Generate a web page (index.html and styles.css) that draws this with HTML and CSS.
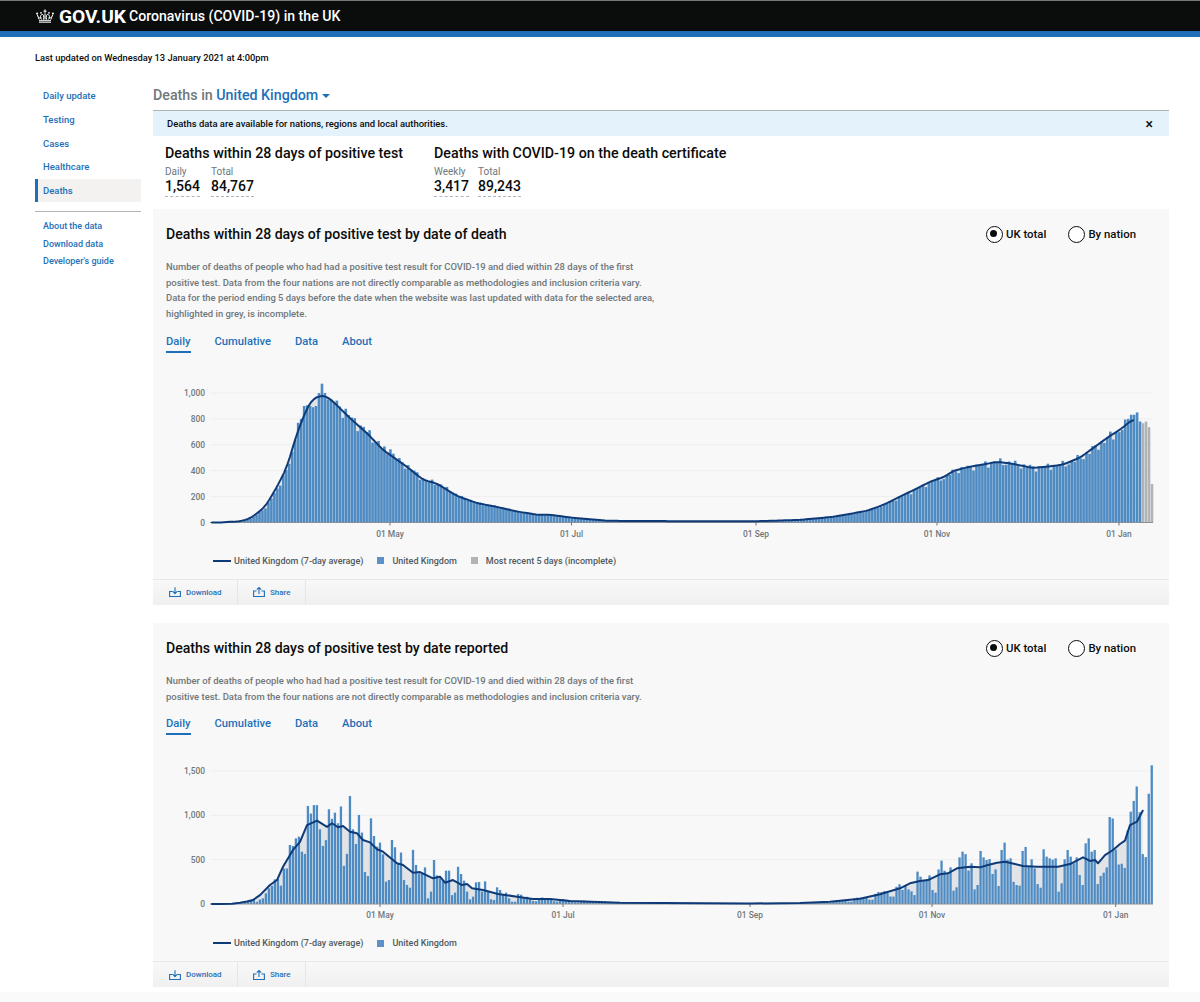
FILE: index.html
```html
<!DOCTYPE html>
<html lang="en">
<head>
<meta charset="utf-8">
<title>Coronavirus (COVID-19) in the UK</title>
<link rel="stylesheet" href="styles.css">
</head>
<body>
<header class="site-header">
  <div class="brand">
    <svg class="crown" viewBox="0 0 18 14" aria-hidden="true">
      <path d="M3 13.200h12M3 11.700h12" fill="none" stroke="#fff" stroke-width="1"/>
      <path d="M3.200 10.600 1.200 5.600M14.800 10.600l2-5M5.800 10.600C3.500 8.600 4.600 5.400 6.300 5.400c1.300 0 1.700 1.900 1.200 5.200M12.200 10.600c2.300-2 1.200-5.200-.5-5.200-1.300 0-1.700 1.900-1.200 5.200M9 10.600V4.200M7.400 2.200h3.200M9 .4v3.400M2.600 8c1 1.200 2.200 1.300 2.800.8M15.400 8c-1 1.200-2.200 1.300-2.800.8" fill="none" stroke="#fff" stroke-width="1"/>
      <circle cx="1.100" cy="4.500" r="1" fill="#fff"/><circle cx="16.900" cy="4.500" r="1" fill="#fff"/><circle cx="5" cy="3.800" r=".9" fill="#fff"/><circle cx="13" cy="3.800" r=".9" fill="#fff"/>
    </svg>
    <span class="brand-mark">GOV.UK</span>
    <span class="brand-title">Coronavirus (COVID-19) in the UK</span>
  </div>
</header>
<p class="updated">Last updated on Wednesday 13 January 2021 at 4:00pm</p>
<div class="layout">
  <nav class="side">
    <ul class="nav-main">
      <li><a href="#">Daily update</a></li>
      <li><a href="#">Testing</a></li>
      <li><a href="#">Cases</a></li>
      <li><a href="#">Healthcare</a></li>
      <li class="is-active"><a href="#">Deaths</a></li>
    </ul>
    <ul class="nav-sub">
      <li><a href="#">About the data</a></li>
      <li><a href="#">Download data</a></li>
      <li><a href="#">Developer's guide</a></li>
    </ul>
  </nav>
  <main class="content">
    <h1 class="page-title">Deaths in <a href="#">United Kingdom</a><span class="caret"></span></h1>
    <div class="banner"><span>Deaths data are available for nations, regions and local authorities.</span><span class="close">×</span></div>
    <section class="headlines">
      <div class="headline">
        <h2>Deaths within 28 days of positive test</h2>
        <div class="metrics">
          <div class="metric"><span class="m-label">Daily</span><span class="m-value">1,564</span></div>
          <div class="metric"><span class="m-label">Total</span><span class="m-value">84,767</span></div>
        </div>
      </div>
      <div class="headline">
        <h2>Deaths with COVID-19 on the death certificate</h2>
        <div class="metrics metrics-tight">
          <div class="metric"><span class="m-label">Weekly</span><span class="m-value">3,417</span></div>
          <div class="metric"><span class="m-label">Total</span><span class="m-value">89,243</span></div>
        </div>
      </div>
    </section>

    <article class="card">
      <div class="card-head">
        <h3>Deaths within 28 days of positive test by date of death</h3>
        <div class="radios">
          <span class="radio is-on">UK total</span>
          <span class="radio">By nation</span>
        </div>
      </div>
      <p class="desc">Number of deaths of people who had had a positive test result for COVID-19 and died within 28 days of the first<br>positive test. Data from the four nations are not directly comparable as methodologies and inclusion criteria vary.<br>Data for the period ending 5 days before the date when the website was last updated with data for the selected area,<br>highlighted in grey, is incomplete.</p>
      <div class="tabs"><a class="is-on" href="#">Daily</a><a href="#">Cumulative</a><a href="#">Data</a><a href="#">About</a></div>
      <svg class="chart" id="chart-death" viewBox="0 0 1016 175" role="img" aria-label="Deaths by date of death"></svg>
      <div class="legend">
        <span class="key-line"></span><span class="key-text">United Kingdom (7-day average)</span>
        <span class="key-box"></span><span class="key-text">United Kingdom</span>
        <span class="key-box key-grey"></span><span class="key-text">Most recent 5 days (incomplete)</span>
      </div>
      <div class="actions">
        <a class="action action-dl" href="#"><svg viewBox="0 0 12 10" aria-hidden="true"><path d="M3.500 4.500H.6v5h10.800v-5H8.500M6 .2v6.300M3.800 4.400 6 6.600l2.200-2.200"/></svg>Download</a>
        <a class="action action-sh" href="#"><svg viewBox="0 0 12 10" aria-hidden="true"><path d="M3.500 4H.6v5.500h10.800V4H8.500M6 7V.6M3.800 2.700 6 .5l2.200 2.200"/></svg>Share</a>
      </div>
    </article>

    <article class="card">
      <div class="card-head">
        <h3>Deaths within 28 days of positive test by date reported</h3>
        <div class="radios">
          <span class="radio is-on">UK total</span>
          <span class="radio">By nation</span>
        </div>
      </div>
      <p class="desc">Number of deaths of people who had had a positive test result for COVID-19 and died within 28 days of the first<br>positive test. Data from the four nations are not directly comparable as methodologies and inclusion criteria vary.</p>
      <div class="tabs"><a class="is-on" href="#">Daily</a><a href="#">Cumulative</a><a href="#">Data</a><a href="#">About</a></div>
      <svg class="chart" id="chart-report" viewBox="0 0 1016 175" role="img" aria-label="Deaths by date reported"></svg>
      <div class="legend">
        <span class="key-line"></span><span class="key-text">United Kingdom (7-day average)</span>
        <span class="key-box"></span><span class="key-text">United Kingdom</span>
      </div>
      <div class="actions">
        <a class="action action-dl" href="#"><svg viewBox="0 0 12 10" aria-hidden="true"><path d="M3.500 4.500H.6v5h10.800v-5H8.500M6 .2v6.300M3.800 4.400 6 6.600l2.200-2.200"/></svg>Download</a>
        <a class="action action-sh" href="#"><svg viewBox="0 0 12 10" aria-hidden="true"><path d="M3.500 4H.6v5.500h10.800V4H8.500M6 7V.6M3.800 2.700 6 .5l2.200 2.200"/></svg>Share</a>
      </div>
    </article>
  </main>
</div>
<div class="page-foot"></div>
<script src="charts.js"></script>
</body>
</html>
```
FILE: styles.css
```css
* { box-sizing: border-box; }
html, body { margin: 0; padding: 0; }
body { background: #fff; color: #0b0c0c; font-family: Roboto, "Liberation Sans", sans-serif; overflow: hidden; }
a { color: #1d70b8; text-decoration: none; }
ul { list-style: none; margin: 0; padding: 0; }
h1, h2, h3, p { margin: 0; }

.site-header { height: 37px; background: #0b0c0c; border-top: 1px solid #777; border-bottom: 6px solid #1d70b8; padding-left: 36px; }
.brand { display: flex; align-items: center; height: 30px; color: #fff; }
.crown { width: 18px; height: 14px; margin-right: 5px; }
.brand-mark { font-size: 19.200px; font-weight: 700; margin-right: 3px; }
.brand-title { font-size: 14.100px; font-weight: 500; }

.updated { font-size: 9.300px; font-weight: 500; line-height: 14px; padding: 14px 0 0 35px; height: 44px; }

.layout { display: flex; padding: 0 31px 0 35px; }
.side { width: 106px; margin-right: 12px; padding-top: 3px; font-size: 9.500px; font-weight: 500; }
.nav-main li { height: 23.700px; display: flex; align-items: center; padding-left: 8px; }
.nav-main li.is-active { background: #f3f2f1; border-left: 3px solid #1d70b8; padding-left: 5px; }
.nav-sub { margin-top: 9px; border-top: 1px solid #b1b4b6; padding-top: 5px; font-size: 9px; }
.nav-sub li { height: 17.600px; display: flex; align-items: center; padding-left: 8px; }

.content { flex: 1; min-width: 0; }
.page-title { font-size: 14.250px; font-weight: 500; color: #6f777b; height: 30px; line-height: 29px; border-bottom: 1px solid #b1b4b6; }
.caret { display: inline-block; margin-left: 4px; border: 4px solid transparent; border-top-color: #1d70b8; border-bottom: 0; vertical-align: middle; }
.banner { display: flex; justify-content: space-between; align-items: center; height: 25px; background: #e3f2fb; padding: 0 16px 0 14px; font-size: 9.450px; font-weight: 500; }
.close { font-size: 14px; line-height: 14px; }

.headlines { display: flex; height: 73px; padding: 8px 0 0 12px; }
.headline { margin-right: 31px; }
.headline h2 { font-size: 14.250px; font-weight: 500; line-height: 18px; }
.metrics { display: flex; gap: 11px; margin-top: 4px; }
.metrics-tight { gap: 9px; }
.metric { display: flex; flex-direction: column; }
.m-label { font-size: 10px; font-weight: 400; color: #6f777b; line-height: 12px; }
.m-value { font-size: 14px; font-weight: 500; line-height: 16px; padding-bottom: 2px; border-bottom: 1px dashed #b1b4b6; }

.card { background: #f8f8f8; margin-bottom: 18px; }
.card-head { display: flex; justify-content: space-between; align-items: center; height: 50px; padding: 0 33px 0 13px; }
.card-head h3 { font-size: 14.100px; font-weight: 500; }
.radios { display: flex; gap: 22px; }
.radio { position: relative; padding-left: 20px; font-size: 11.400px; font-weight: 500; line-height: 16px; }
.radio::before { content: ""; position: absolute; left: 0; top: 0; width: 15px; height: 15px; border: 1.500px solid #0b0c0c; border-radius: 50%; background: #fff; }
.radio.is-on::after { content: ""; position: absolute; left: 4px; top: 4px; width: 7px; height: 7px; border-radius: 50%; background: #0b0c0c; }
.desc { padding-left: 13px; font-size: 9.450px; font-weight: 500; line-height: 15.700px; color: #6f777b; }
.tabs { display: flex; gap: 24px; margin: 11px 0 17px; padding-left: 13px; }
.tabs a { font-size: 11.200px; font-weight: 500; line-height: 18px; padding-bottom: 2px; border-bottom: 2px solid transparent; height: 20px; }
.tabs a.is-on { border-bottom-color: #1d70b8; }

.chart { display: block; width: 1016px; height: 175px; }
.grid { stroke: #eeeeee; stroke-width: 1; }
.axis { stroke: #8a9095; stroke-width: 1; }
.tick { stroke: #6f777b; stroke-width: 1; }
.area { fill: #e1e3e6; }
.bar { fill: #4e8bc3; }
.bar-grey { fill: #b1b4b6; }
.avg { fill: none; stroke: #0f3a78; stroke-width: 2; stroke-linejoin: round; stroke-linecap: round; }
.lbl { font-size: 8.400px; font-weight: 500; fill: #6f777b; font-family: Roboto, "Liberation Sans", sans-serif; }

.legend { display: flex; align-items: center; height: 16px; margin: 8px 0 10px; padding-left: 60px; font-size: 9px; font-weight: 500; color: #505a5f; }
.key-line { width: 18px; height: 2px; background: #0f3a78; margin-right: 3px; }
.key-box { width: 7px; height: 7px; background: #5b93c9; margin: 0 8px 0 14px; }
.key-grey { background: #b1b4b6; }
.actions { display: flex; height: 26px; border-top: 1px solid #e8e8e8; background: linear-gradient(#f8f8f8, #f0f0f0); }
.action { display: flex; align-items: center; border-right: 1px solid #e6e6e6; font-size: 8px; font-weight: 500; }
.action svg { width: 12px; height: 10px; margin-right: 5px; fill: none; stroke: #1d70b8; stroke-width: 1.100; }
.action-dl { width: 85px; padding-left: 16px; }
.action-sh { width: 68px; padding-left: 15px; }
.page-foot { height: 10px; margin-top: -13px; background: #fafafa; }
```
FILE: charts.js
```js
(function () {
  var NS = 'http://www.w3.org/2000/svg';
  var OX = 153;

  function el(parent, name, attrs, text) {
    var n = document.createElementNS(NS, name);
    for (var k in attrs) n.setAttribute(k, attrs[k]);
    if (text) n.textContent = text;
    parent.appendChild(n);
    return n;
  }

  function interp(pts, x) {
    if (x <= pts[0][0]) return pts[0][1];
    for (var i = 1; i < pts.length; i++) {
      if (x <= pts[i][0]) {
        var a = pts[i - 1], b = pts[i];
        return a[1] + (b[1] - a[1]) * (x - a[0]) / (b[0] - a[0]);
      }
    }
    return pts[pts.length - 1][1];
  }

  /* Resample a hand-read curve at day spacing and run a short moving average. */
  function smooth(pts, step, radius) {
    var out = [], start = pts[0][0], end = pts[pts.length - 1][0];
    for (var x = start; x <= end; x += step) {
      var sum = 0, n = 0;
      for (var k = -radius; k <= radius; k++) {
        sum += interp(pts, x + k * step);
        n++;
      }
      out.push([x, sum / n]);
    }
    return out;
  }

  function draw(id, cfg) {
    var svg = document.getElementById(id);
    var y = function (v) { return cfg.base - v * cfg.scale; };
    cfg.yTicks.forEach(function (t) {
      if (t) el(svg, 'line', { 'class': 'grid', x1: 57, x2: 1000, y1: y(t), y2: y(t) });
      el(svg, 'text', { 'class': 'lbl', x: 52, y: y(t) + 3, 'text-anchor': 'end' }, t.toLocaleString('en-GB'));
    });
    var area = cfg.line.map(function (p) { return (p[0] - OX) + ',' + y(p[1]).toFixed(2); });
    var last = cfg.line[cfg.line.length - 1][0] - OX, first = cfg.line[0][0] - OX;
    el(svg, 'polygon', { 'class': 'area', points: first + ',' + cfg.base + ' ' + area.join(' ') + ' ' + last + ',' + cfg.base });
    cfg.bars.forEach(function (b) {
      var h = Math.max(b.v * cfg.scale, 0);
      el(svg, 'rect', { 'class': b.grey ? 'bar-grey' : 'bar', x: (b.x - OX).toFixed(2), y: (cfg.base - h).toFixed(2), width: cfg.barW, height: h.toFixed(2) });
    });
    el(svg, 'line', { 'class': 'axis', x1: 57, x2: 1000, y1: cfg.base, y2: cfg.base });
    cfg.xTicks.forEach(function (t) {
      var tx = t[0] - OX;
      el(svg, 'line', { 'class': 'tick', x1: tx, x2: tx, y1: cfg.base, y2: cfg.base + 3 });
      el(svg, 'text', { 'class': 'lbl', x: tx, y: cfg.base + 14, 'text-anchor': 'middle' }, t[1]);
    });
    el(svg, 'polyline', { 'class': 'avg', points: area.join(' ') });
  }

  /* Chart 1: by date of death. Points are [page x, deaths]. */
  var raw1 = [[212,0],[220,0],[240,10],[250,30],[265,120],[277,275],[287,430],[297,690],[307,885],[313,955],[319,975],[325,980],[333,935],[350,805],[367,690],[383,560],[407,430],[423,330],[437,300],[457,205],[477,150],[497,120],[517,85],[537,60],[550,60],[570,39],[607,13],[683,10],[757,10],[800,20],[833,44],[867,90],[883,135],[900,200],[917,263],[930,315],[945,354],[953,398],[967,426],[980,444],[997,468],[1010,457],[1033,421],[1047,431],[1063,447],[1080,501],[1093,574],[1110,669],[1120,716],[1130,780],[1133,793]];
  var line1 = smooth(raw1, 3, 1);
  var over1 = { 294: 640, 297: 770, 300: 800, 303: 900, 306: 905, 309: 900, 312: 890, 315: 900, 318: 1000, 321: 1072, 324: 1000, 327: 950, 330: 955, 390: 565, 962: 485, 988: 490, 1034: 475, 1037: 475, 1075: 525 };
  var bars1 = [];
  var tail1 = [800, 832, 832, 850, 780];
  var greys = [767, 780, 736, 297];
  var P1 = 2.975, N1 = 317;
  for (var i = 0; i < N1; i++) {
    var x = 1153.3 - 2.6 - (N1 - 1 - i) * P1;
    var r = N1 - 1 - i;
    var v = interp(raw1, x);
    if (r < 4) { bars1.push({ x: x, v: greys[3 - r], grey: true }); continue; }
    if (r < 9) v = tail1[8 - r];
    else {
      v = v * (1 + 0.045 * Math.sin(i * 2.4) + 0.03 * Math.sin(i * 5.1));
      var key = Math.round(x / 3) * 3;
      if (over1[key]) v = over1[key];
    }
    bars1.push({ x: x, v: v });
  }
  draw('chart-death', {
    base: 152.5, scale: 0.1295, barW: 2.6,
    yTicks: [0, 200, 400, 600, 800, 1000],
    xTicks: [[390, '01 May'], [571.5, '01 Jul'], [756, '01 Sep'], [937, '01 Nov'], [1119, '01 Jan']],
    line: line1, bars: bars1
  });

  /* Chart 2: by date reported. */
  var line2 = [[212,0],[220,0],[232,4],[240,15],[247,28],[253,45],[260,100],[270,214],[277,270],[283,420],[293,610],[300,700],[307,890],[317,940],[327,870],[332,910],[338,865],[343,880],[350,815],[357,797],[363,722],[370,695],[377,617],[383,590],[397,459],[403,440],[413,353],[420,360],[433,290],[440,308],[445,240],[453,270],[462,214],[467,225],[472,177],[483,158],[498,113],[517,83],[533,56],[550,56],[570,35],[620,15],[750,6],[800,10],[830,25],[860,60],[880,110],[900,177],[910,233],[920,260],[928,270],[940,335],[948,346],[957,402],[970,421],[980,413],[988,440],[997,466],[1005,477],[1015,451],[1023,428],[1037,421],[1047,421],[1058,421],[1070,450],[1083,526],[1090,485],[1095,496],[1098,459],[1105,552],[1113,609],[1120,676],[1125,714],[1130,890],[1137,928],[1142.7,1052]];
  var left2 = [25,50,64,120,177,205,278,280,207,400,400,665,655,740,760,590,565,1105,1020,1115,1115,842,655,720,1068,960,1030,910,1100,430,565,1218,842,677,1004,805,360,315,966,767,647,692,560,252,270,722,640,460,580,270,215,184,610,440,345,345,413,64,140,496,323,290,263,376,376,100,128,420,338,263,140,53,83,244,248,140,255,140,53,45,188,158,113,128,64,26,26,113,105,64];
  var right2 = [158,214,165,143,101,365,308,263,263,323,158,128,390,489,376,338,413,150,188,526,590,563,376,459,165,214,598,526,496,507,338,390,203,609,692,500,515,250,214,207,598,643,421,504,402,225,184,617,534,515,500,515,139,233,504,609,534,459,526,327,214,684,740,590,609,225,316,353,413,981,964,613,445,454,407,830,1041,1162,1325,1035,563,529,1243,1564];
  var week = [1.3, 1.2, 0.55, 0.6, 0.95, 1.2, 1.2];
  var bars2 = [];
  var P2 = 3.003, N2 = 314;
  for (var j = 0; j < N2; j++) {
    var rr = N2 - 1 - j;
    var xx = 1150.6 - rr * P2;
    var val;
    var li = Math.round((xx + 1 - 256.67) / 3);
    if (rr < right2.length) val = right2[right2.length - 1 - rr];
    else if (li >= 0 && li < left2.length) val = left2[li];
    else val = interp(line2, xx) * week[rr % 7];
    bars2.push({ x: xx, v: val });
  }
  draw('chart-report', {
    base: 152, scale: 0.0887, barW: 2.3,
    yTicks: [0, 500, 1000, 1500],
    xTicks: [[380, '01 May'], [563, '01 Jul'], [750, '01 Sep'], [932, '01 Nov'], [1115.7, '01 Jan']],
    line: line2, bars: bars2
  });
})();
```
